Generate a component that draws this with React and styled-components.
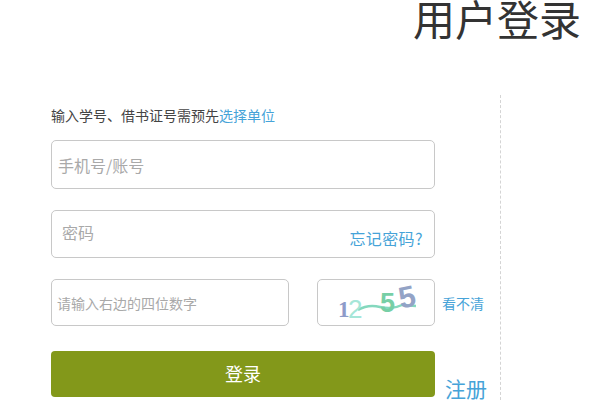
import React from 'react'
import styled, { createGlobalStyle } from 'styled-components'

const FONT = '"Noto Sans CJK SC", "Liberation Sans", sans-serif'

const GlobalStyle = createGlobalStyle`
  html, body {
    margin: 0;
    padding: 0;
    background: #fff;
    overflow: hidden;
    height: 400px;
  }
  input::placeholder {
    color: #a9a9a9;
    opacity: 1;
  }
`

const Page = styled.div`
  width: 600px;
  height: 400px;
  overflow: hidden;
  font-family: ${FONT};
  display: flex;
  flex-direction: column;
`

const Title = styled.h1`
  margin: -9px 19px 0 0;
  height: 104px;
  flex: none;
  text-align: right;
  font-size: 42px;
  line-height: 54px;
  font-weight: 400;
  color: #333;
`

const Panel = styled.div`
  display: flex;
  flex: 1;
  padding-left: 51px;
`

const Form = styled.form`
  width: 384px;
  flex: none;
  display: flex;
  flex-direction: column;
`

const Hint = styled.p`
  margin: 0;
  height: 45px;
  padding-top: 10px;
  box-sizing: border-box;
  font-size: 14px;
  line-height: 20px;
  color: #444;
`

const Link = styled.a`
  color: #46a3d8;
  text-decoration: none;
`

const Field = styled.div`
  position: relative;
  height: ${props => props.$height}px;
  margin-bottom: 21px;
`

const TextInput = styled.input`
  box-sizing: border-box;
  width: 100%;
  height: 100%;
  margin: 0;
  border: 1px solid #c8c8c8;
  border-radius: 5px;
  background: #fff;
  outline: none;
  font-family: ${FONT};
  font-size: ${props => props.$size || 16}px;
  padding: ${props => props.$padding || '0 0 0 6px'};
`

const ForgotLink = styled(Link)`
  position: absolute;
  right: 12px;
  bottom: 10px;
  font-size: 16px;
  line-height: 20px;
  letter-spacing: 0.4px;
`

const CaptchaRow = styled.div`
  display: flex;
  height: 47px;
  margin-bottom: 25px;
  position: relative;
`

const CaptchaInput = styled(TextInput)`
  width: 238px;
  flex: none;
`

const CaptchaBox = styled.div`
  box-sizing: border-box;
  width: 118px;
  height: 100%;
  margin-left: 28px;
  flex: none;
  border: 1px solid #c8c8c8;
  border-radius: 5px;
  background: #fff;
  overflow: hidden;
`

const RefreshLink = styled(Link)`
  position: absolute;
  left: 391px;
  top: 14px;
  font-size: 14px;
  line-height: 20px;
  white-space: nowrap;
`

const SubmitRow = styled.div`
  display: flex;
  position: relative;
`

const SubmitButton = styled.button`
  width: 100%;
  height: 46px;
  border: none;
  border-radius: 4px;
  background: #83981a;
  color: #fff;
  font-family: ${FONT};
  font-size: 18px;
  padding: 0 0 2px;
`

const RegisterLink = styled(Link)`
  position: absolute;
  left: 394px;
  top: 23px;
  font-size: 21px;
  line-height: 28px;
  white-space: nowrap;
`

const Divider = styled.div`
  margin-left: 65px;
  width: 0;
  border-left: 1px dashed #d4d4d4;
`

const Captcha = () => (
  <svg width="116" height="45" viewBox="0 0 116 45">
    <path d="M40 30 Q50 24 62 27 T84 25 L98 26" fill="none" stroke="#84d8be" strokeWidth="2.5" />
    <text x="20" y="37" fontFamily="Liberation Serif" fontSize="23" fontWeight="700" fill="#8e9bc9">1</text>
    <text x="30" y="38" fontFamily="Liberation Sans" fontSize="26" fill="#a5e6d8">2</text>
    <text x="62" y="32" fontFamily="Liberation Sans" fontSize="27" fontWeight="700" fill="#77cfa6">5</text>
    <text x="81" y="27" fontFamily="Liberation Sans" fontSize="30" fontWeight="700" fill="#93a3c6" transform="rotate(-12 90 18)">5</text>
  </svg>
)

export default function App() {
  return (
    <Page>
      <GlobalStyle />
      <Title>用户登录</Title>
      <Panel>
        <Form>
          <Hint>输入学号、借书证号需预先<Link>选择单位</Link></Hint>
          <Field $height={49}>
            <TextInput placeholder="手机号/账号" />
          </Field>
          <Field $height={48}>
            <TextInput placeholder="密码" $padding="0 0 4px 10px" />
            <ForgotLink>忘记密码?</ForgotLink>
          </Field>
          <CaptchaRow>
            <CaptchaInput placeholder="请输入右边的四位数字" $size={14} $padding="0 0 0 5px" />
            <CaptchaBox><Captcha /></CaptchaBox>
            <RefreshLink>看不清</RefreshLink>
          </CaptchaRow>
          <SubmitRow>
            <SubmitButton type="button">登录</SubmitButton>
            <RegisterLink>注册</RegisterLink>
          </SubmitRow>
        </Form>
        <Divider />
      </Panel>
    </Page>
  )
}
